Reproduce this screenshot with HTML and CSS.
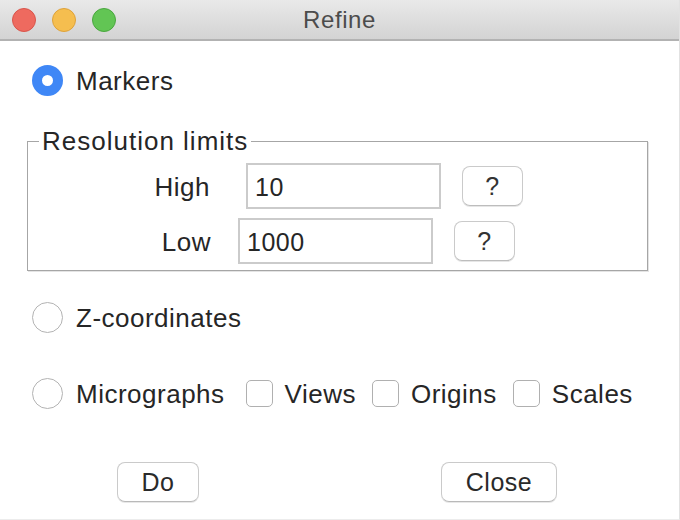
FILE: index.html
```html
<!DOCTYPE html>
<html>
<head>
<meta charset="utf-8">
<link rel="stylesheet" href="styles.css">
</head>
<body>
<div class="window">
  <div class="titlebar">
    <div class="lights">
      <span class="light red"></span>
      <span class="light yellow"></span>
      <span class="light green"></span>
    </div>
    <div class="title">Refine</div>
  </div>
  <div class="content">
    <div class="opt-row markers">
      <span class="radio on"></span><span class="txt">Markers</span>
    </div>
    <fieldset class="group">
      <legend>Resolution limits</legend>
      <div class="lim lim-high">
        <span class="lbl">High</span>
        <span class="entry">10</span>
        <span class="qbtn">?</span>
      </div>
      <div class="lim lim-low">
        <span class="lbl">Low</span>
        <span class="entry">1000</span>
        <span class="qbtn">?</span>
      </div>
    </fieldset>
    <div class="opt-row zrow">
      <span class="radio"></span><span class="txt">Z-coordinates</span>
    </div>
    <div class="opt-row mrow">
      <span class="radio"></span><span class="txt">Micrographs</span>
      <span class="check first"></span><span class="txt">Views</span>
      <span class="check"></span><span class="txt">Origins</span>
      <span class="check"></span><span class="txt">Scales</span>
    </div>
    <div class="buttons">
      <span class="btn btn-do">Do</span>
      <span class="btn btn-close">Close</span>
    </div>
  </div>
</div>
</body>
</html>
```
FILE: styles.css
```css
html, body {
  margin: 0;
  padding: 0;
  background: #ffffff;
}
body {
  width: 680px;
  height: 520px;
  overflow: hidden;
  font-family: "Liberation Sans", Arial, sans-serif;
  color: #262626;
}
.window {
  width: 679px;
  height: 519px;
  border-right: 1px solid #e2e2e2;
  border-bottom: 1px solid #ececec;
  background: #ffffff;
}
.titlebar {
  height: 39px;
  border-bottom: 2px solid #b2b2b2;
  background: linear-gradient(#e9e9e9, #d3d3d3);
  display: flex;
  align-items: center;
}
.lights {
  display: flex;
  gap: 16px;
  padding-left: 12px;
  width: 250px;
}
.light {
  width: 24px;
  height: 24px;
  border-radius: 50%;
  box-sizing: border-box;
}
.red { background: #ee6a5f; border: 1px solid #d9554b; }
.yellow { background: #f5be4f; border: 1px solid #dea23a; }
.green { background: #62c554; border: 1px solid #4aa73f; }
.title {
  margin-left: 41px;
  font-size: 24px;
  letter-spacing: 0.6px;
  color: #4c4c4c;
}
.content {
  display: flex;
  flex-direction: column;
}
.opt-row {
  display: flex;
  align-items: center;
  height: 31px;
  padding-left: 32px;
  font-size: 26px;
  letter-spacing: 0.5px;
}
.txt { margin-left: 12px; padding-top: 2px; }
.radio + .txt { margin-left: 13px; }
.markers { margin-top: 24px; }
.radio {
  width: 31px;
  height: 31px;
  border-radius: 50%;
  box-sizing: border-box;
  border: 1px solid #b3b3b3;
  background: #fff;
  flex: none;
}
.radio.on {
  border: 10px solid #3f87f6;
  background: #ffffff;
}
.check {
  width: 27px;
  height: 27px;
  box-sizing: border-box;
  border: 1px solid #b0b0b0;
  border-radius: 5px;
  margin-left: 16px;
  flex: none;
}
.check.first { margin-left: 21px; }
.group {
  margin: 32px 0 0 27px;
  width: 619px;
  padding: 0 0 6px 0;
  border: 1px solid #a6a6a6;
  box-shadow: 1px 1px 0 #e4e4e4;
  min-width: 0;
}
.group legend {
  margin-left: 11px;
  padding: 0 3px;
  font-size: 26px;
  line-height: 26px;
  letter-spacing: 1px;
  color: #262626;
}
.lim {
  display: flex;
  align-items: center;
  height: 46px;
  font-size: 26px;
  letter-spacing: 0.5px;
}
.lim-high { margin-top: 9px; padding-left: 122px; }
.lim-low { margin-top: 9px; padding-left: 123px; }
.lbl {
  width: 60px;
  text-align: right;
  padding-top: 2px;
}
.lim-high .entry { margin-left: 36px; }
.lim-low .entry { margin-left: 27px; }
.entry {
  width: 195px;
  height: 46px;
  box-sizing: border-box;
  border: 2px solid #cbcbcb;
  padding-left: 7px;
  padding-top: 2px;
  display: flex;
  align-items: center;
  font-size: 25px;
}
.qbtn {
  margin-left: 21px;
  width: 61px;
  height: 40px;
  box-sizing: border-box;
  border: 1px solid #cacaca;
  border-bottom-color: #bdbdbd;
  border-radius: 8px;
  box-shadow: 0 1px 0 #e6e6e6;
  display: flex;
  align-items: center;
  justify-content: center;
  font-size: 25px;
  color: #333;
}
.zrow { margin-top: 31px; }
.mrow { margin-top: 45px; }
.buttons {
  display: flex;
  margin-top: 53px;
}
.btn {
  height: 40px;
  box-sizing: border-box;
  border: 1px solid #cacaca;
  border-bottom-color: #b9b9b9;
  border-radius: 8px;
  box-shadow: 0 1px 0 #e8e8e8;
  display: flex;
  align-items: center;
  justify-content: center;
  font-size: 25px;
  letter-spacing: 0.5px;
  color: #2a2a2a;
}
.btn-do { margin-left: 117px; width: 82px; }
.btn-close { margin-left: 242px; width: 116px; }
```
